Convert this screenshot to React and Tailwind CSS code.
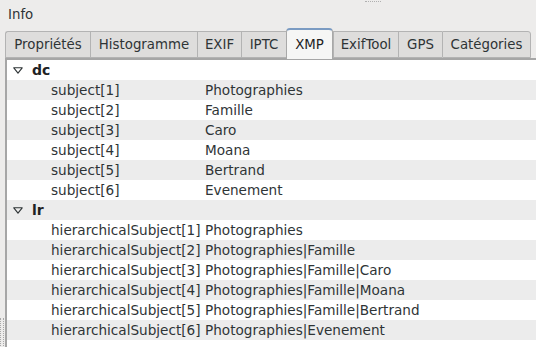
import React from "react";

const tabs = [
  { label: "Propriétés", w: 85 },
  { label: "Histogramme", w: 107 },
  { label: "EXIF", w: 44 },
  { label: "IPTC", w: 45 },
  { label: "XMP", w: 47, active: true },
  { label: "ExifTool", w: 65 },
  { label: "GPS", w: 44 },
  { label: "Catégories", w: 89 },
];

const groups = [
  {
    name: "dc",
    rows: [
      ["subject[1]", "Photographies"],
      ["subject[2]", "Famille"],
      ["subject[3]", "Caro"],
      ["subject[4]", "Moana"],
      ["subject[5]", "Bertrand"],
      ["subject[6]", "Evenement"],
    ],
  },
  {
    name: "lr",
    rows: [
      ["hierarchicalSubject[1]", "Photographies"],
      ["hierarchicalSubject[2]", "Photographies|Famille"],
      ["hierarchicalSubject[3]", "Photographies|Famille|Caro"],
      ["hierarchicalSubject[4]", "Photographies|Famille|Moana"],
      ["hierarchicalSubject[5]", "Photographies|Famille|Bertrand"],
      ["hierarchicalSubject[6]", "Photographies|Evenement"],
    ],
  },
];

function Tri() {
  return (
    <svg width="10" height="7" viewBox="0 0 10 7" className="shrink-0">
      <path d="M0.8 0.8 H9.2 L5 6.2 Z" fill="none" stroke="#2e3436" strokeWidth="1.1" strokeLinejoin="round" />
    </svg>
  );
}

export default function App() {
  let idx = 0;
  const rows = [];
  groups.forEach((g) => {
    const i = idx++;
    rows.push(
      <div key={g.name} className={`h-[20px] flex items-center ${i % 2 ? "bg-[#ececec]" : "bg-white"}`}>
        <span className="ml-[6px]"><Tri /></span>
        <span className="ml-[9px] font-bold text-[14px] text-[#1e2224]">{g.name}</span>
      </div>
    );
    g.rows.forEach(([k, v]) => {
      const j = idx++;
      rows.push(
        <div key={k} className={`h-[20px] flex items-center ${j % 2 ? "bg-[#ececec]" : "bg-white"}`}>
          <span className="ml-[44px] w-[154px] shrink-0 whitespace-nowrap">{k}</span>
          <span className="whitespace-nowrap">{v}</span>
        </div>
      );
    });
  });

  return (
    <div
      className="w-[536px] h-[347px] overflow-hidden bg-[#edeceb] text-[#2e3436] flex flex-col relative"
      style={{ fontFamily: '"DejaVu Sans", sans-serif', fontSize: "13.6px" }}
    >
      <div className="absolute top-[1px] left-[365px] w-[16px] h-[2px] border-t border-dotted border-[#b0b0b0]" />
      <div className="h-[27px] pl-[8px] pt-[6px] leading-[17px] text-[13.33px]">Info</div>
      <div className="flex items-end pl-[5px] h-[31px] text-[13.33px]">
        {tabs.map((t) =>
          t.active ? (
            <div
              key={t.label}
              className="h-[31px] flex items-center justify-center bg-[#f6f6f5] border border-[#a8a8a8] border-b-0 border-t-[2px] border-t-[#7b9bc2] rounded-t-[4px] -mb-[1px] relative z-10 text-[#1e2224]"
              style={{ width: t.w }}
            >
              <span className="mt-[1px]">{t.label}</span>
            </div>
          ) : (
            <div
              key={t.label}
              className="h-[27px] flex items-center justify-center bg-[#dedddc] border border-[#b3b3b3] border-r-0 last:border-r first:rounded-tl-[3px] last:rounded-tr-[3px] text-[#2e3436]"
              style={{ width: t.w }}
            >
              {t.label}
            </div>
          )
        )}
      </div>
      <div className="flex flex-1 min-h-0">
        <div className="w-[5px] relative">
          <div className="absolute left-[0px] top-[260px] w-[4px] h-[28px] border-l border-r border-dotted border-[#a8a8a8]" />
        </div>
        <div className="flex-1 border-l-[2px] border-t-[2px] border-[#a6a6a6] bg-white overflow-hidden">
          {rows}
        </div>
      </div>
    </div>
  );
}
